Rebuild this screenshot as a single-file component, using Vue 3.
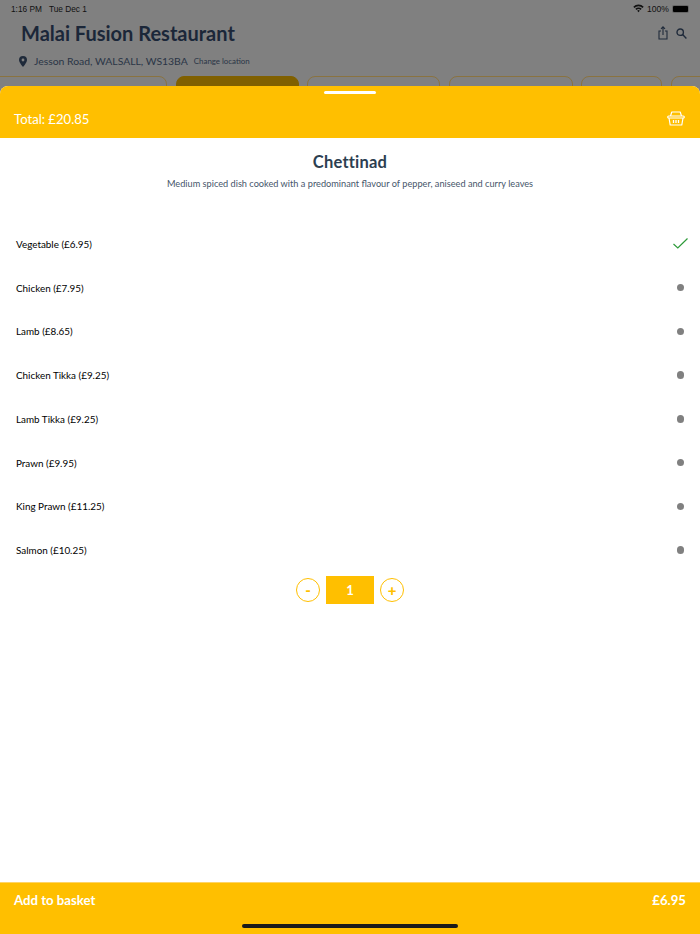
<template>
  <div class="screen">
    <div class="behind">
      <div class="status">
        <span>1:16 PM</span>
        <span class="status__date">Tue Dec 1</span>
        <span class="status__right">
          <svg width="11" height="9" viewBox="0 0 11 9">
            <path d="M0.3 2.8A7.3 7.3 0 0 1 10.7 2.8L9.5 4A5.6 5.6 0 0 0 1.5 4Z" fill="#111" />
            <path d="M2.3 4.8A4.4 4.4 0 0 1 8.7 4.8L7.5 6A2.7 2.7 0 0 0 3.5 6Z" fill="#111" />
            <path d="M4.2 6.8A1.8 1.8 0 0 1 6.8 6.8L5.5 8.2Z" fill="#111" />
          </svg>
          <span>100%</span>
          <span class="battery"><i></i></span>
        </span>
      </div>
      <div class="head">
        <h1>Malai Fusion Restaurant</h1>
        <div class="head__icons">
          <svg width="10" height="14" viewBox="0 0 10 14" fill="none" stroke="#1f2a3a" stroke-width="1.1">
            <path d="M3 5H1V13H9V5H7" />
            <path d="M5 9V1M3 2.8L5 0.8L7 2.8" />
          </svg>
          <svg width="11" height="11" viewBox="0 0 11 11" fill="none" stroke="#1f2a3a" stroke-width="1.4">
            <circle cx="4.2" cy="4.2" r="3.2" />
            <path d="M6.6 6.6L10.4 10.4" />
          </svg>
        </div>
      </div>
      <div class="location">
        <svg width="8" height="11" viewBox="0 0 8 11">
          <path fill-rule="evenodd" d="M4 0A4 4 0 0 0 0 4C0 6.6 4 11 4 11S8 6.6 8 4A4 4 0 0 0 4 0ZM4 2.6A1.4 1.4 0 1 1 4 5.4A1.4 1.4 0 0 1 4 2.6Z" fill="#1f2a3a" />
        </svg>
        <span class="location__text">Jesson Road, WALSALL, WS13BA</span>
        <span class="location__change">Change location</span>
      </div>
      <div class="chips">
        <div
          v-for="chip in chips"
          :key="chip.width"
          class="chip"
          :class="{ 'chip--active': chip.active }"
          :style="{ width: chip.width + 'px' }"
        ></div>
      </div>
    </div>

    <div class="sheet">
      <div class="sheet__top">
        <div class="grabber"></div>
        <div class="sheet__total">
          <span class="sheet__amount">Total: £20.85</span>
          <svg width="18" height="15" viewBox="0 0 18 15" fill="none" stroke="#fff" stroke-width="1.2" stroke-linejoin="round">
            <path d="M3.5 5L4.8 1H13.2L14.5 5" />
            <rect x="0.7" y="5" width="16.6" height="2" rx="1" />
            <path d="M2 7L3.2 14H14.8L16 7" />
            <path d="M6.5 9V12M9 9V12M11.5 9V12" stroke-width="1.3" />
          </svg>
        </div>
      </div>

      <div class="sheet__body">
        <h2>Chettinad</h2>
        <p class="desc">Medium spiced dish cooked with a predominant flavour of pepper, aniseed and curry leaves</p>

        <ul class="options">
          <li v-for="(opt, i) in options" :key="opt" class="option">
            <span>{{ opt }}</span>
            <svg v-if="i === 0" class="check" width="15" height="11" viewBox="0 0 15 11" fill="none" stroke="#2e9b3a" stroke-width="1.2">
              <path d="M0.5 6L4.8 10L14.5 0.5" />
            </svg>
            <span v-else class="dot"></span>
          </li>
        </ul>

        <div class="stepper">
          <span class="stepper__btn">-</span>
          <span class="stepper__qty">1</span>
          <span class="stepper__btn">+</span>
        </div>
      </div>

      <div class="footer">
        <div class="footer__row">
          <span>Add to basket</span>
          <span>£6.95</span>
        </div>
        <div class="home-bar"></div>
      </div>
    </div>
  </div>
</template>

<script setup>
const chips = [
  { width: 176 },
  { width: 123, active: true },
  { width: 133 },
  { width: 124 },
  { width: 81 },
  { width: 60 },
];

const options = [
  "Vegetable (£6.95)",
  "Chicken (£7.95)",
  "Lamb (£8.65)",
  "Chicken Tikka (£9.25)",
  "Lamb Tikka (£9.25)",
  "Prawn (£9.95)",
  "King Prawn (£11.25)",
  "Salmon (£10.25)",
];
</script>

<style>
html,
body {
  margin: 0;
  background: #fff;
}
</style>

<style scoped>
.screen {
  position: relative;
  width: 700px;
  height: 934px;
  overflow: hidden;
  background: #808080;
  font-family: Lato, "Open Sans", sans-serif;
}

.status {
  display: flex;
  align-items: center;
  height: 17px;
  padding: 0 11px 0 11px;
  font-family: "Liberation Sans", sans-serif;
  font-size: 8.3px;
  color: #111;
}

.status__date {
  margin-left: 7px;
}

.status__right {
  display: flex;
  align-items: center;
  gap: 3px;
  margin-left: auto;
  font-size: 8.6px;
}

.battery {
  display: block;
  width: 17px;
  height: 8px;
  padding: 1px;
  box-sizing: border-box;
  border-radius: 2px;
  background: #666;
}

.battery i {
  display: block;
  height: 100%;
  border-radius: 1px;
  background: #000;
}

.head {
  display: flex;
  align-items: center;
  justify-content: space-between;
  height: 32px;
  padding: 0 13px 0 21px;
}

.head h1 {
  margin: 0;
  font-size: 20px;
  font-weight: 700;
  color: #1b2739;
}

.head__icons {
  display: flex;
  align-items: center;
  gap: 8px;
}

.location {
  display: flex;
  align-items: center;
  height: 20px;
  margin-top: 2px;
  padding-left: 19px;
  color: #2a3546;
}

.location__text {
  margin-left: 7px;
  font-size: 10.4px;
}

.location__change {
  margin-left: 6px;
  font-size: 7.9px;
}

.chips {
  display: flex;
  gap: 8.5px;
  margin: 5px 0 0 -9px;
}

.chip {
  flex-shrink: 0;
  height: 40px;
  box-sizing: border-box;
  border: 1px solid #8a7340;
  border-radius: 8px;
}

.chip--active {
  background: #806000;
  border-color: #806000;
}

.sheet {
  position: absolute;
  top: 86px;
  left: 0;
  right: 0;
  bottom: 0;
  display: flex;
  flex-direction: column;
  border-radius: 8px 8px 0 0;
  overflow: hidden;
  background: #fff;
}

.sheet__top {
  height: 52px;
  padding-top: 5px;
  box-sizing: border-box;
  background: #ffbf00;
}

.grabber {
  width: 52px;
  height: 3px;
  margin: 0 auto;
  border-radius: 2px;
  background: #fff;
}

.sheet__total {
  display: flex;
  align-items: center;
  justify-content: space-between;
  margin-top: 15px;
  padding: 0 15px 0 14px;
  font-size: 13.1px;
  color: #fff;
}

.sheet__amount {
  margin-top: 2px;
}

.sheet__body {
  flex: 1;
}

.sheet__body h2 {
  margin: 13px 0 0;
  font-size: 16.5px;
  line-height: 22px;
  font-weight: 700;
  text-align: center;
  color: #2c3e50;
  letter-spacing: 0.2px;
}

.desc {
  margin: 4px 0 0;
  font-size: 9.2px;
  line-height: 14px;
  text-align: center;
  color: #46566a;
}

.options {
  margin: 31px 0 0;
  padding: 0;
  list-style: none;
}

.option {
  display: flex;
  align-items: center;
  justify-content: space-between;
  height: 43.75px;
  padding: 0 13px 0 16px;
  font-size: 9.9px;
  color: #000;
}

.check {
  margin-right: -1px;
}

.dot {
  width: 7.5px;
  height: 7.5px;
  margin-right: 2.8px;
  border-radius: 50%;
  background: #808080;
}

.stepper {
  display: flex;
  align-items: center;
  justify-content: center;
  gap: 6px;
  margin-top: 4px;
}

.stepper__btn {
  display: flex;
  align-items: center;
  justify-content: center;
  width: 24px;
  height: 24px;
  box-sizing: border-box;
  border: 1.5px solid #ffbf00;
  border-radius: 50%;
  font-size: 15px;
  font-weight: 900;
  color: #ffbf00;
}

.stepper__qty {
  width: 48px;
  height: 28px;
  font-size: 13px;
  font-weight: 700;
  line-height: 28px;
  text-align: center;
  color: #fff;
  background: #ffbf00;
}

.footer {
  height: 52px;
  box-sizing: border-box;
  padding-top: 9px;
  border-top: 1px solid #ffd466;
  background: #ffbf00;
}

.footer__row {
  display: flex;
  justify-content: space-between;
  padding: 0 14px;
  font-size: 13.2px;
  line-height: 17px;
  font-weight: 700;
  color: #fff;
}

.home-bar {
  width: 216px;
  height: 4px;
  margin: 15px auto 0;
  border-radius: 2px;
  background: #1a1a1a;
}
</style>
